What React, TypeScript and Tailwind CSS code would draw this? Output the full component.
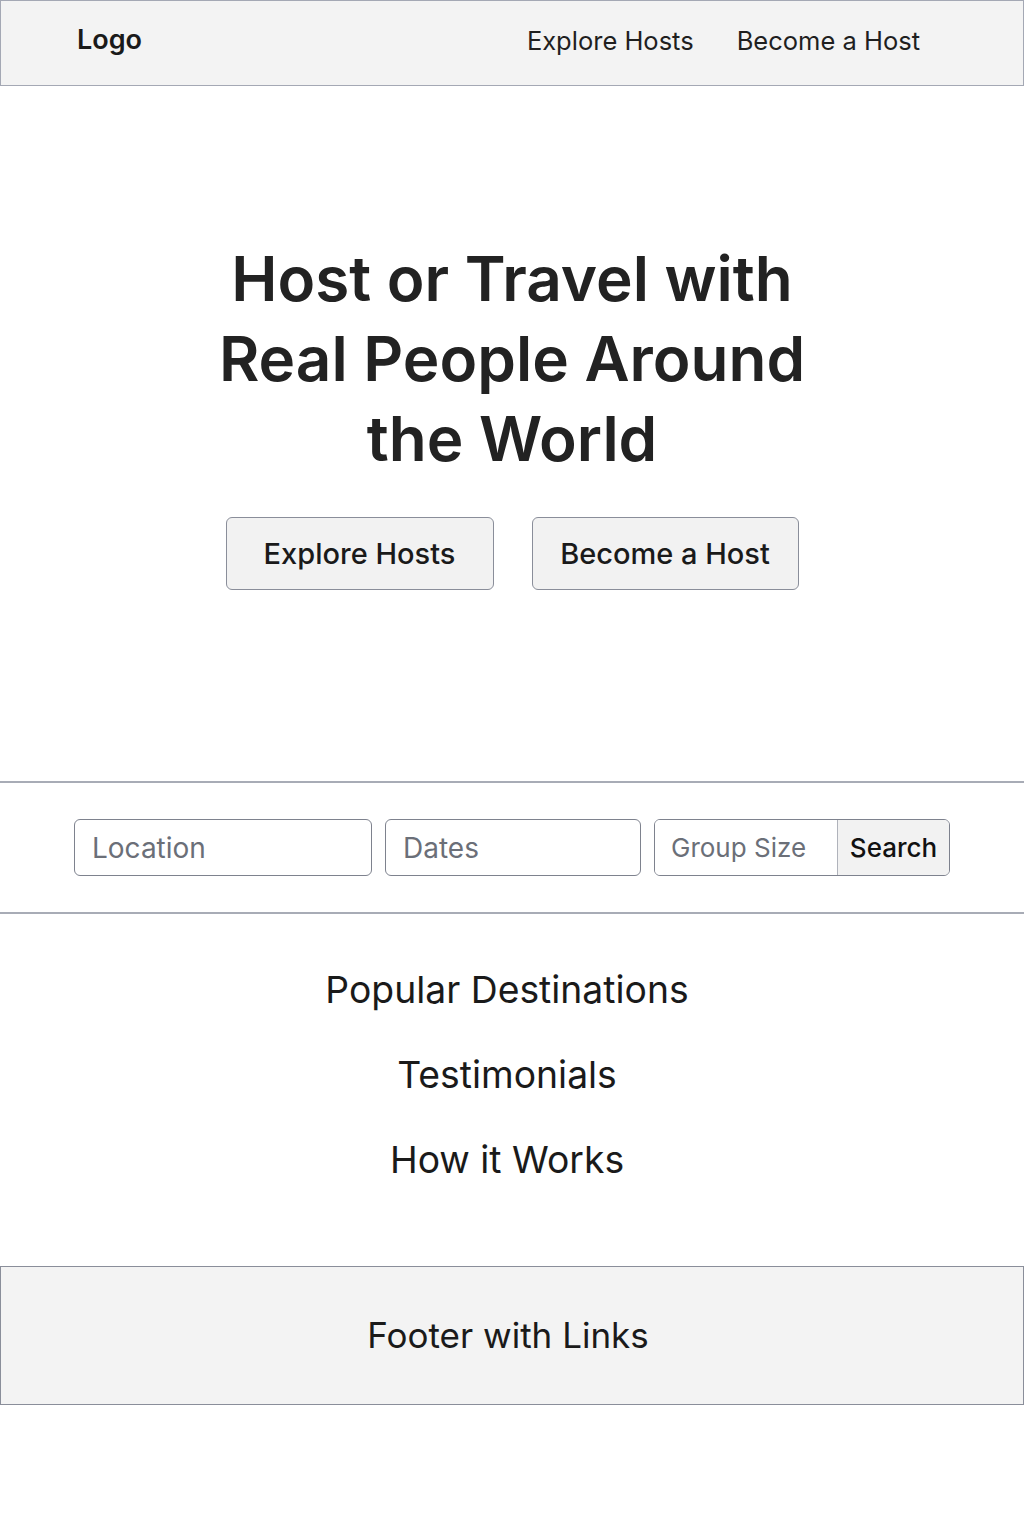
import React from 'react';

const font = { fontFamily: 'Inter, "Noto Sans", sans-serif' };

function Header() {
  return (
    <header className="h-[86px] bg-[#f3f3f3] border border-[#a4a8b4] flex items-center justify-between pl-[76px] pr-[103px] pb-[6px]">
      <div className="text-[27px] font-semibold text-[#1a1a1a]">Logo</div>
      <nav className="flex gap-[43px] text-[25.5px] text-[#1f1f1f] pt-[2px]">
        <a>Explore Hosts</a>
        <a>Become a Host</a>
      </nav>
    </header>
  );
}

function Hero() {
  return (
    <section className="h-[695px] flex flex-col items-center pt-[153px]">
      <h1 className="text-[62px] leading-[80px] font-semibold text-[#222] text-center w-[640px]">
        Host or Travel with Real People Around the World
      </h1>
      <div className="flex gap-[38px] mt-[38px]">
        <button className="w-[268px] h-[73px] bg-[#f2f2f2] border border-[#8a8e9a] rounded-[6px] text-[29px] font-medium text-[#1a1a1a]">
          Explore Hosts
        </button>
        <button className="w-[267px] h-[73px] bg-[#f2f2f2] border border-[#8a8e9a] rounded-[6px] text-[29px] font-medium text-[#1a1a1a]">
          Become a Host
        </button>
      </div>
    </section>
  );
}

function SearchBar() {
  return (
    <section className="h-[133px] border-y-2 border-[#a8acb6] flex items-center pl-[74px]">
      <div className="flex items-center">
        <div className="w-[298px] h-[57px] border border-[#7e828e] rounded-[6px] flex items-center pl-[17px] text-[28px] text-[#6b6f78]">
          Location
        </div>
        <div className="w-[256px] h-[57px] ml-[13px] border border-[#7e828e] rounded-[6px] flex items-center pl-[17px] text-[28px] text-[#6b6f78]">
          Dates
        </div>
        <div className="ml-[13px] h-[57px] border border-[#7e828e] rounded-[6px] flex overflow-hidden">
          <div className="w-[182px] flex items-center pl-[16px] text-[26px] text-[#6b6f78] bg-white">
            Group Size
          </div>
          <div className="w-[112px] flex items-center justify-center border-l border-[#b0b3bb] bg-[#f2f2f2] text-[26px] font-medium text-[#111]">
            Search
          </div>
        </div>
      </div>
    </section>
  );
}

function Sections() {
  return (
    <section className="h-[352px] flex flex-col items-center pt-[53px] pr-[10px] gap-[39px] text-[37.3px] leading-[46px] text-[#1a1a1a]">
      <h2>Popular Destinations</h2>
      <h2>Testimonials</h2>
      <h2>How it Works</h2>
    </section>
  );
}

function Footer() {
  return (
    <footer className="h-[139px] bg-[#f3f3f3] border border-[#8a8e9a] flex items-center justify-center pr-[8px] text-[35px] text-[#1a1a1a]">
      Footer with Links
    </footer>
  );
}

export default function App() {
  return (
    <div className="w-[1024px] min-h-[1536px] bg-white" style={font}>
      <Header />
      <Hero />
      <SearchBar />
      <Sections />
      <Footer />
    </div>
  );
}
